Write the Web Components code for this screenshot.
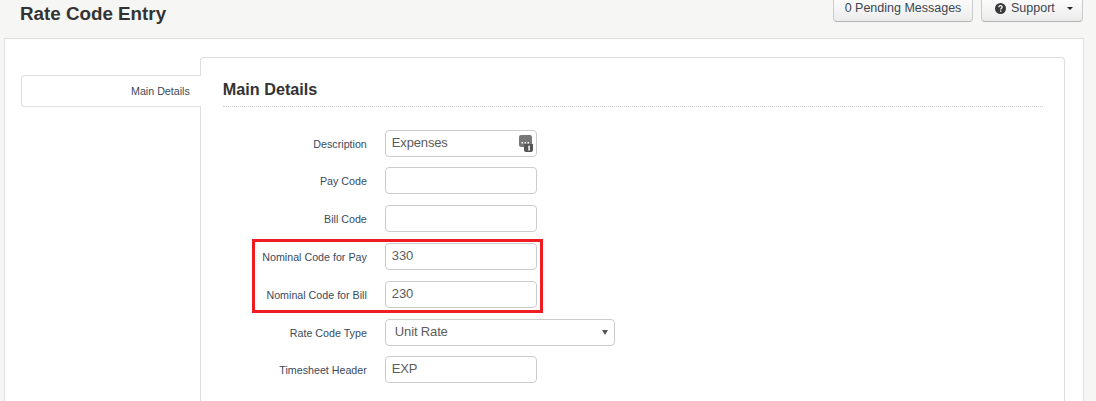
<!DOCTYPE html>
<html>
<head>
<meta charset="utf-8">
<title>Rate Code Entry</title>
<style>
  html, body { margin: 0; height: 401px; overflow: hidden; background: #f6f6f5; font-family: "Liberation Sans", Arial, sans-serif; }
</style>
</head>
<body>
<page-header heading="Rate Code Entry"></page-header>
<main-panel>
  <side-tab slot="tabs">Main Details</side-tab>
  <form-section heading="Main Details">
    <form-row label="Description" value="Expenses" icon></form-row>
    <form-row label="Pay Code" tight></form-row>
    <form-row label="Bill Code"></form-row>
    <form-row label="Nominal Code for Pay" value="330"></form-row>
    <form-row label="Nominal Code for Bill" value="230"></form-row>
    <form-row label="Rate Code Type" value="Unit Rate" select></form-row>
    <form-row label="Timesheet Header" value="EXP" tight></form-row>
    <red-box></red-box>
  </form-section>
</main-panel>

<script>
class PageHeader extends HTMLElement {
  connectedCallback() {
    this.attachShadow({ mode: "open" });
    this.shadowRoot.innerHTML = `
      <style>
        :host { display: flex; height: 38px; align-items: flex-start; justify-content: space-between; padding: 0 13px 0 20px; box-sizing: border-box; overflow: hidden; }
        h1 { margin: 4px 0 0; font-size: 18.8px; line-height: 20px; font-weight: bold; color: #333; }
        .btns { display: flex; gap: 8px; margin-top: -6px; }
        button {
          height: 28px; box-sizing: border-box; padding: 5px 0 0; font: 12.5px/17px "Liberation Sans", Arial, sans-serif; color: #3d4650;
          background: linear-gradient(#fff, #ececec); border: 1px solid #ccc; border-bottom-color: #b3b3b3; border-radius: 4px;
          display: flex; align-items: flex-start; justify-content: center;
        }
        .pending { width: 140px; }
        .support { width: 102px; justify-content: flex-start; padding-left: 13px; }
        svg.q { margin: 3px 5px 0 0; }
        .caret { width: 0; height: 0; border: 3px solid transparent; border-top: 3px solid #222; border-bottom: 0; margin: 7px 0 0 12px; }
      </style>
      <h1>${this.getAttribute("heading")}</h1>
      <div class="btns">
        <button class="pending">0 Pending Messages</button>
        <button class="support">
          <svg class="q" width="11" height="11" viewBox="0 0 11 11"><circle cx="5.5" cy="5.5" r="5.5" fill="#3a3a3a"/><path d="M3.8 4.2c.1-1 .8-1.500 1.700-1.500s1.700.5 1.700 1.400c0 1.200-1.500 1.200-1.500 2.300" fill="none" stroke="#fff" stroke-width="1.200"/><rect x="5" y="7.400" width="1.300" height="1.300" fill="#fff"/></svg>
          Support<span class="caret"></span>
        </button>
      </div>`;
  }
}
customElements.define("page-header", PageHeader);

class MainPanel extends HTMLElement {
  constructor() {
    super();
    this.attachShadow({ mode: "open" });
    this.shadowRoot.innerHTML = `
      <style>
        :host { display: flex; align-items: flex-start; margin-left: 4px; width: 1080px; height: 363px; box-sizing: border-box; background: #fff; border: 1px solid #e0e0e0; border-bottom: 0; padding: 18px 18px 0 16px; }
      </style>
      <slot name="tabs"></slot>
      <slot></slot>`;
  }
}
customElements.define("main-panel", MainPanel);

class SideTab extends HTMLElement {
  constructor() {
    super();
    this.attachShadow({ mode: "open" });
    this.shadowRoot.innerHTML = `
      <style>
        :host { display: block; position: relative; z-index: 1; box-sizing: border-box; width: 180px; height: 32px; margin: 18px -1px 0 0; background: #fff; border: 1px solid #ddd; border-right: 0; border-radius: 4px 0 0 4px; text-align: right; padding: 9px 11px 0 0; font-size: 10.7px; line-height: 13px; color: #3b4a5c; }
      </style>
      <slot></slot>`;
  }
}
customElements.define("side-tab", SideTab);

class FormSection extends HTMLElement {
  connectedCallback() {
    this.attachShadow({ mode: "open" });
    this.shadowRoot.innerHTML = `
      <style>
        :host { display: block; position: relative; box-sizing: border-box; width: 866px; height: 344px; border: 1px solid #ddd; border-bottom: 0; border-radius: 4px 4px 0 0; padding: 0 21px 0 22px; }
        h2 { margin: 0 0 23px; height: 49px; box-sizing: border-box; padding-top: 21px; font-size: 16.2px; line-height: 20px; font-weight: bold; color: #333; border-bottom: 1px dotted #ccc; }
        .rows { position: relative; display: flex; flex-direction: column; gap: 11px; }
      </style>
      <h2>${this.getAttribute("heading")}</h2>
      <div class="rows"><slot></slot></div>`;
  }
}
customElements.define("form-section", FormSection);

class FormRow extends HTMLElement {
  connectedCallback() {
    const value = this.getAttribute("value") || "";
    const isSelect = this.hasAttribute("select");
    this.attachShadow({ mode: "open" });
    this.shadowRoot.innerHTML = `
      <style>
        :host { display: flex; align-items: center; height: 27px; }
        :host([tight]) { margin-top: -1px; }
        label { width: 144px; margin-right: 18px; text-align: right; font-size: 10.7px; line-height: 13px; color: #3b4a5c; position: relative; top: 1px; }
        .field { position: relative; box-sizing: border-box; width: ${isSelect ? 230 : 152}px; height: 27px; background: #fff; border: 1px solid #ccc; border-radius: 4px; padding: 0 ${isSelect ? 9 : 6}px; font-size: 13px; letter-spacing: -0.15px; line-height: 23px; color: #5c5c5c; }
        .arrow { position: absolute; right: 6px; top: 10px; width: 0; height: 0; border: 3px solid transparent; border-top: 5px solid #555; border-bottom: 0; }
        svg { position: absolute; right: 3px; top: 4px; }
      </style>
      <label>${this.getAttribute("label")}</label>
      <div class="field">${value}${isSelect ? '<span class="arrow"></span>' : ""}${this.hasAttribute("icon") ? `
        <svg width="14" height="17" viewBox="0 0 14 17"><path d="M0 2Q0 0 2 0h9q2 0 2 2v7H8v3H2q-2 0-2-2z" fill="#777"/><path d="M5 9h9v6q0 2-2 2H7q-2 0-2-2z" fill="#555"/><path d="M2.500 7h1.500v1.500H2.500zM5.500 7h1.500v1.500H5.500zM8.500 7h1.500v1.500H8.500z" fill="#fff"/><path d="M9.300 11l1.500-.7v5.200H9.300z" fill="#fff"/></svg>` : ""}</div>`;
  }
}
customElements.define("form-row", FormRow);

class RedBox extends HTMLElement {
  constructor() {
    super();
    this.attachShadow({ mode: "open" });
    this.shadowRoot.innerHTML = `
      <style>
        :host { position: absolute; left: 29px; top: 109px; width: 291px; height: 74px; box-sizing: border-box; border: 3px solid #f01c24; }
      </style>`;
  }
}
customElements.define("red-box", RedBox);
</script>
</body>
</html>
